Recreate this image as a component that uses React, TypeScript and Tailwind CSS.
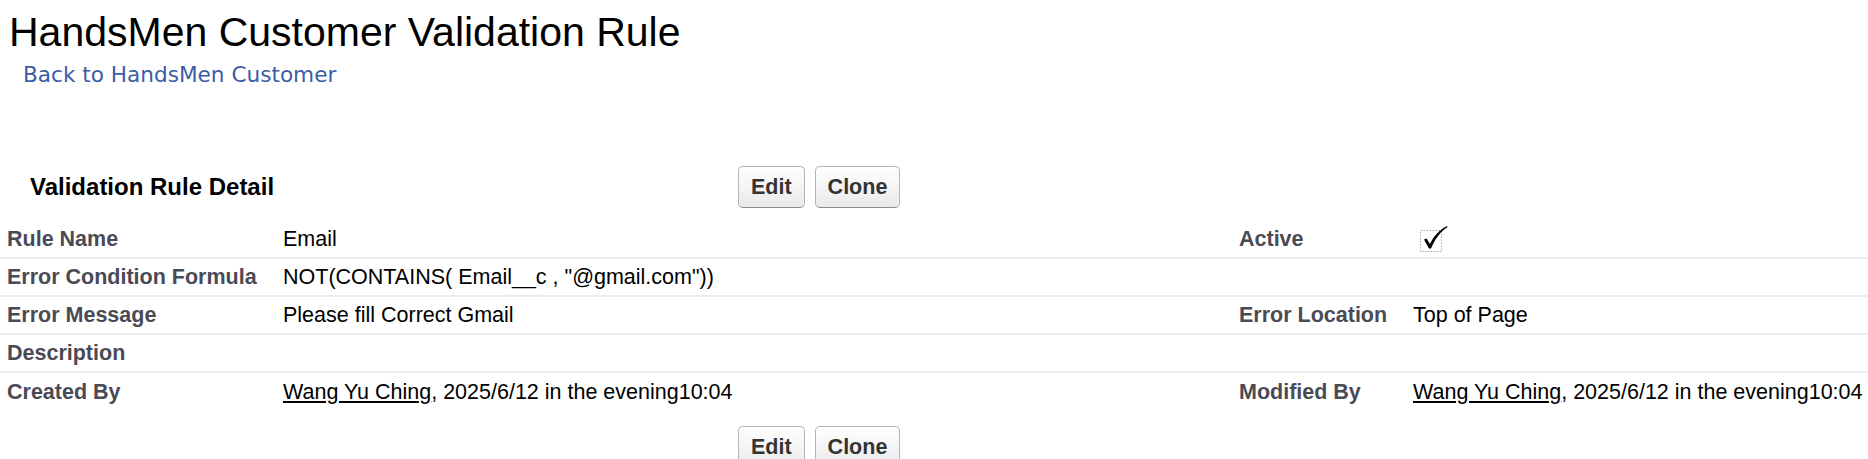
import React from 'react'

const rows = [
  { label: 'Rule Name', value: 'Email', label2: 'Active', value2: 'check' },
  { label: 'Error Condition Formula', value: 'NOT(CONTAINS( Email__c , "@gmail.com"))', label2: '', value2: '' },
  { label: 'Error Message', value: 'Please fill Correct Gmail', label2: 'Error Location', value2: 'Top of Page' },
  { label: 'Description', value: '', label2: '', value2: '' },
  { label: 'Created By', value: 'user', label2: 'Modified By', value2: 'user' },
]

function CheckIcon() {
  return (
    <svg width="30" height="28" viewBox="0 0 30 28" className="block ml-[7px]">
      <rect x="0.5" y="5.5" width="21" height="21" fill="none" stroke="#a8a8a8" strokeWidth="1" strokeDasharray="1.5 1.5" />
      <path d="M4 14.5 L6.5 13.5 L10 19 C13.5 11.5 19 5 27 1 L27.5 2 C20.5 6.5 15 14 11 23.5 L9 23.5 Z" fill="#000" />
    </svg>
  )
}

function UserStamp() {
  return (
    <span>
      <a href="#" className="text-black underline underline-offset-2">Wang Yu Ching</a>, 2025/6/12 in the evening10:04
    </span>
  )
}

function Value({ v }: { v: string }) {
  if (v === 'check') return <CheckIcon />
  if (v === 'user') return <UserStamp />
  return <span>{v}</span>
}

function Buttons() {
  return (
    <div className="flex gap-[10px]">
      {['Edit', 'Clone'].map((b) => (
        <button
          key={b}
          className="h-[42px] px-[12px] rounded-[5px] border border-[#b5b5b5] border-b-[#8a8a8a] bg-gradient-to-b from-white to-[#e9e9ea] text-[#333] font-bold text-[21.5px]"
        >
          {b}
        </button>
      ))}
    </div>
  )
}

export default function App() {
  return (
    <div className="bg-white w-[1868px] h-[459px] overflow-hidden font-['Liberation_Sans',Arial,sans-serif] text-black">
      <h1 className="pl-[9px] pt-[8px] text-[41px] leading-[48px] font-normal">HandsMen Customer Validation Rule</h1>
      <div className="pl-[23px] mt-[6px]">
        <a href="#" className="font-['DejaVu_Sans',Verdana,sans-serif] text-[21.6px] leading-[26px] text-[#3a5da6]">
          Back to HandsMen Customer
        </a>
      </div>

      <div className="mt-[77px] flex items-center">
        <div className="w-[738px] pl-[30px]">
          <h2 className="text-[24px] font-bold leading-[28px]">Validation Rule Detail</h2>
        </div>
        <Buttons />
      </div>

      <div className="mt-[13px]">
        {rows.map((r, i) => (
          <div
            key={r.label}
            className={`grid grid-cols-[283px_956px_174px_1fr] items-center h-[38px] text-[21.5px] ${i < rows.length - 1 ? 'border-b-2 border-[#ececec]' : ''}`}
          >
            <div className="pl-[7px] font-bold text-[#4a4a56]">{r.label}</div>
            <div><Value v={r.value} /></div>
            <div className="font-bold text-[#4a4a56]">{r.label2}</div>
            <div><Value v={r.value2} /></div>
          </div>
        ))}
      </div>

      <div className="mt-[15px] flex">
        <div className="w-[738px]" />
        <Buttons />
      </div>
    </div>
  )
}
